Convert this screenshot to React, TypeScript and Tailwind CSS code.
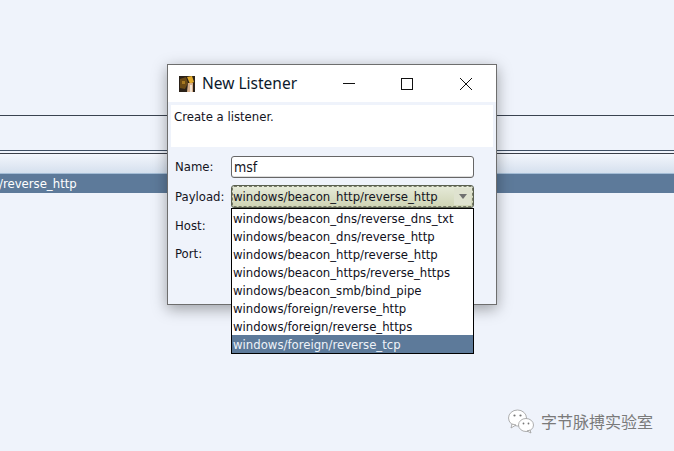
const options = [
  "windows/beacon_dns/reverse_dns_txt",
  "windows/beacon_dns/reverse_http",
  "windows/beacon_http/reverse_http",
  "windows/beacon_https/reverse_https",
  "windows/beacon_smb/bind_pipe",
  "windows/foreign/reverse_http",
  "windows/foreign/reverse_https",
  "windows/foreign/reverse_tcp",
];

function AppIcon() {
  return (
    <svg width="16" height="16" viewBox="0 0 16 16" className="shrink-0">
      <rect width="16" height="16" fill="#2a2118" />
      <path d="M1 3 L7 1 L9 7 L6 13 L1 12 Z" fill="#6b4a16" />
      <path d="M8 1 L13 0 L15 6 L11 8 Z" fill="#e0a92c" />
      <path d="M9 7 L14 7 L14 16 L8 16 Z" fill="#d8b08c" />
      <path d="M11 9 L13 9 L13 16 L11 16 Z" fill="#f2e4d4" />
      <path d="M3 5 L6 5 L6 8 L3 8 Z" fill="#a87a22" />
    </svg>
  );
}

function WeChatMark() {
  return (
    <svg width="28" height="26" viewBox="0 0 28 26" className="shrink-0">
      <ellipse cx="10.5" cy="10" rx="9" ry="8" fill="#ffffff" stroke="#9a9a9a" strokeWidth="0.8" />
      <path d="M5 16 L4 20 L9 17 Z" fill="#ffffff" stroke="#9a9a9a" strokeWidth="0.8" />
      <ellipse cx="19" cy="17" rx="7.5" ry="6.5" fill="#ffffff" stroke="#9a9a9a" strokeWidth="0.8" />
      <path d="M23 22 L24 25 L20 23 Z" fill="#ffffff" stroke="#9a9a9a" strokeWidth="0.8" />
      <circle cx="7.5" cy="7.5" r="1.1" fill="#777777" />
      <circle cx="13.5" cy="7.5" r="1.1" fill="#777777" />
      <circle cx="16.5" cy="15.5" r="0.9" fill="#777777" />
      <circle cx="21.5" cy="15.5" r="0.9" fill="#777777" />
    </svg>
  );
}

export default function App() {
  return (
    <div className="relative h-[451px] w-[674px] overflow-hidden bg-[#eff3fb] font-['DejaVu_Sans_Condensed','DejaVu_Sans',sans-serif] text-[13px] text-[#14141e]">
      <div className="h-[115px]" />
      <div className="h-px bg-[#3a4350]" />
      <div className="h-[34px]" />
      <div className="h-px bg-[#3f4f63]" />
      <div className="h-0.5" />
      <div className="h-px bg-[#3a3f48]" />
      <div className="h-[19px] bg-gradient-to-b from-[#f3f6fc] to-[#d5e0ee]" />
      <div className="flex h-[20px] items-center border-t border-[#a4bdd6] bg-[#5d7a9a] text-white">
        <span className="ml-[-1px]">/reverse_http</span>
      </div>

      <div className="absolute left-[167px] top-[64px] flex h-[241px] w-[330px] flex-col border border-[#6e6e6e] bg-[#eff3fb] shadow-[0_4px_14px_rgba(0,0,0,0.35)]">
        <div className="flex h-[37px] items-center bg-white pl-[11px] pr-[7px]">
          <AppIcon />
          <span className="ml-[7px] font-['Noto_Sans',sans-serif] text-[15.5px] text-[#0c1a2c]">New Listener</span>
          <div className="ml-auto flex items-center">
            <svg width="46" height="16" viewBox="0 0 46 16">
              <path d="M17 7.5 H29" stroke="#111" strokeWidth="1" />
            </svg>
            <svg width="46" height="16" viewBox="0 0 46 16" className="ml-[12px]">
              <rect x="17.5" y="2.5" width="11" height="11" fill="none" stroke="#111" strokeWidth="1" />
            </svg>
            <svg width="46" height="16" viewBox="0 0 46 16" className="ml-[13px]">
              <path d="M17 2 L29 14 M29 2 L17 14" stroke="#111" strokeWidth="1" />
            </svg>
          </div>
        </div>

        <div className="mx-[3px] mt-[3px] h-[42px] bg-white px-[3px] pt-[3px] leading-[17px]">Create a listener.</div>

        <div className="relative flex flex-col pl-[7px] pt-[9px]">
          <div className="flex h-[22px] items-center">
            <span className="w-[56px]">Name:</span>
            <div className="flex h-[22px] w-[243px] items-center rounded-[3px] border border-[#666] bg-white px-[2px] pt-px text-[14px] shadow-[inset_0_-1px_0_#ddd]">
              msf
            </div>
          </div>
          <div className="mt-[7px] flex h-[23px] items-center">
            <span className="w-[56px]">Payload:</span>
            <div className="relative flex h-[23px] w-[243px] items-center rounded-[3px] border border-[#5a6050] bg-gradient-to-b from-[#e6ead9] to-[#cfd4b4] px-px outline-1 outline-offset-[-2px] outline-dashed outline-[#777a68]">
              windows/beacon_http/reverse_http
              <div className="absolute right-[2px] top-[2px] flex h-[17px] w-[17px] items-center justify-center bg-[#dfe2cf]">
                <svg width="8" height="5" viewBox="0 0 8 5">
                  <path d="M0 0 H8 L4 5 Z" fill="#707070" />
                </svg>
              </div>
            </div>
          </div>
          <div className="mt-[7px] flex h-[22px] items-center">Host:</div>
          <div className="mt-[6px] flex h-[22px] items-center">Port:</div>

          <div className="absolute left-[63px] top-[61px] w-[243px] border border-black bg-white text-[#10101c]">
            {options.map((o, i) => (
              <div
                key={o}
                className={i === 7 ? "h-[18px] bg-[#5d7a9a] pl-px pt-px leading-[18px] text-[#eef2f8]" : "h-[18px] pl-px pt-px leading-[18px]"}
              >
                {o}
              </div>
            ))}
          </div>
        </div>
      </div>

      <div className="absolute left-[507px] top-[408px] flex items-center gap-[6px]">
        <WeChatMark />
        <span className="font-['Noto_Sans_CJK_SC',sans-serif] text-[16px] text-[#7a7a7a]">字节脉搏实验室</span>
      </div>
    </div>
  );
}
